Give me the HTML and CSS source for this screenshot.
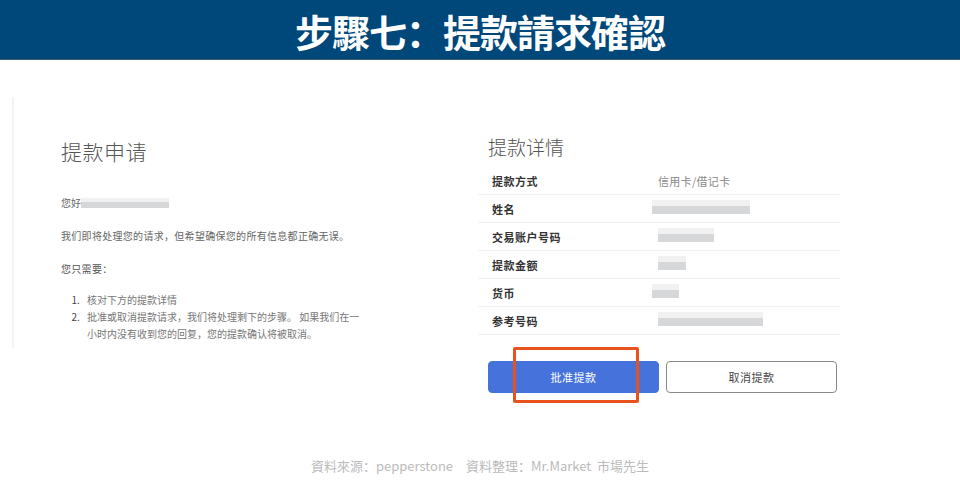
FILE: index.html
```html
<!DOCTYPE html>
<html lang="zh">
<head>
<meta charset="utf-8">
<link rel="stylesheet" href="styles.css">
</head>
<body>
<header class="banner"><h1>步驟七：提款請求確認</h1></header>
<main class="page">
  <section class="left">
    <h2 class="left-title">提款申请</h2>
    <p class="hello">您好<span class="blur blur-name"></span></p>
    <p class="txt">我们即将处理您的请求，但希望确保您的所有信息都正确无误。</p>
    <p class="txt need">您只需要：</p>
    <ol class="steps">
      <li>核对下方的提款详情</li>
      <li>批准或取消提款请求，我们将处理剩下的步骤。 如果我们在一小时内没有收到您的回复，您的提款确认将被取消。</li>
    </ol>
  </section>
  <section class="right">
    <h2 class="right-title">提款详情</h2>
    <div class="table">
      <div class="row"><span class="lbl">提款方式</span><span class="val">信用卡/借记卡</span></div>
      <div class="row"><span class="lbl">姓名</span><span class="val"><span class="blur b1"></span></span></div>
      <div class="row"><span class="lbl">交易账户号码</span><span class="val"><span class="blur b2"></span></span></div>
      <div class="row"><span class="lbl">提款金额</span><span class="val"><span class="blur b3"></span></span></div>
      <div class="row"><span class="lbl">货币</span><span class="val"><span class="blur b4"></span></span></div>
      <div class="row"><span class="lbl">参考号码</span><span class="val"><span class="blur b5"></span></span></div>
    </div>
    <div class="actions">
      <button class="btn approve">批准提款</button>
      <button class="btn cancel">取消提款</button>
      <span class="highlight"></span>
    </div>
  </section>
</main>
<footer class="source">資料來源：pepperstone　資料整理：Mr.Market&nbsp;&nbsp;市場先生</footer>
</body>
</html>
```

FILE: styles.css
```css
* { box-sizing: border-box; }
html, body { margin: 0; padding: 0; background: #fff; }
body {
  width: 960px; height: 502px; overflow: hidden;
  font-family: "Noto Sans CJK SC", "Noto Sans", sans-serif;
}
.banner {
  height: 60px;
  background: #00477a;
  border-bottom: 1px solid #3d5f78;
  display: flex; align-items: center; justify-content: center;
}
.banner h1 {
  margin: 0;
  color: #fff;
  font-family: "Noto Sans CJK TC", sans-serif;
  font-weight: 700;
  font-size: 38px;
  line-height: 1;
  letter-spacing: -1px;
  padding-top: 2px;
}
.page {
  display: flex;
  margin-top: 37px;
  height: 251px;
}
.left {
  margin-left: 12px;
  width: 466px;
  border-left: 2px solid #f3f3f3;
  padding: 41px 0 0 47px;
  color: #666;
}
.left-title {
  margin: 0;
  font-weight: 300;
  font-size: 21px;
  line-height: 26px;
  color: #555;
  letter-spacing: 0.5px;
}
.hello, .txt {
  margin: 0;
  font-size: 10px;
  line-height: 14px;
  color: #666;
}
.hello { margin-top: 32px; display: flex; align-items: center; }
.txt { margin-top: 19px; letter-spacing: 0.3px; }
.need { color: #555; }
.steps {
  margin: 15px 0 0 0;
  padding-left: 21px;
  width: 300px;
  font-size: 10px;
  line-height: 17px;
  color: #777;
}
.steps li { padding-left: 5px; }
.steps li::marker { color: #444; }
.blur {
  display: inline-block;
  height: 10px;
  background:
    linear-gradient(#f0f0f0 0 45%, #d2d3d5 45% 100%);
  filter: blur(0.6px);
  opacity: 0.9;
}
.blur-name { width: 88px; margin-left: 0; }
.right {
  width: 362px;
  padding-top: 38px;
}
.right-title {
  margin: 0 0 8px 10px;
  font-weight: 300;
  font-size: 19px;
  line-height: 24px;
  color: #555;
}
.row {
  display: flex;
  align-items: center;
  height: 28px;
  border-bottom: 1px solid #f1f1f1;
  font-size: 11px;
}
.lbl {
  width: 180px;
  padding-left: 14px;
  font-weight: 700;
  color: #333;
  letter-spacing: 0.5px;
}
.val { color: #888; letter-spacing: 0.3px; }
.b1 { width: 98px; height: 14px; margin-left: -6px; }
.b2 { width: 56px; height: 14px; }
.b3 { width: 28px; height: 14px; }
.b4 { width: 27px; height: 14px; margin-left: -6px; }
.b5 { width: 105px; height: 14px; }
.actions {
  position: relative;
  display: flex;
  gap: 7px;
  margin-top: 26px;
  margin-left: 10px;
}
.btn {
  width: 171px;
  height: 32px;
  border-radius: 4px;
  font-family: "Noto Sans CJK SC", sans-serif;
  font-size: 11px;
  letter-spacing: 0.5px;
  cursor: pointer;
}
.approve {
  background: #4672dc;
  border: 1px solid #4672dc;
  color: #fff;
}
.cancel {
  background: #fff;
  border: 1px solid #8a8a8a;
  color: #444;
}
.highlight {
  position: absolute;
  left: 25px; top: -14px;
  width: 126px; height: 56px;
  border: 3px solid #e9511d;
  border-radius: 2px;
}
.source {
  margin-top: 109px;
  text-align: center;
  font-size: 13px;
  line-height: 18px;
  color: #bbbbbb;
  font-family: "Noto Sans CJK TC", "Open Sans", sans-serif;
}
```
